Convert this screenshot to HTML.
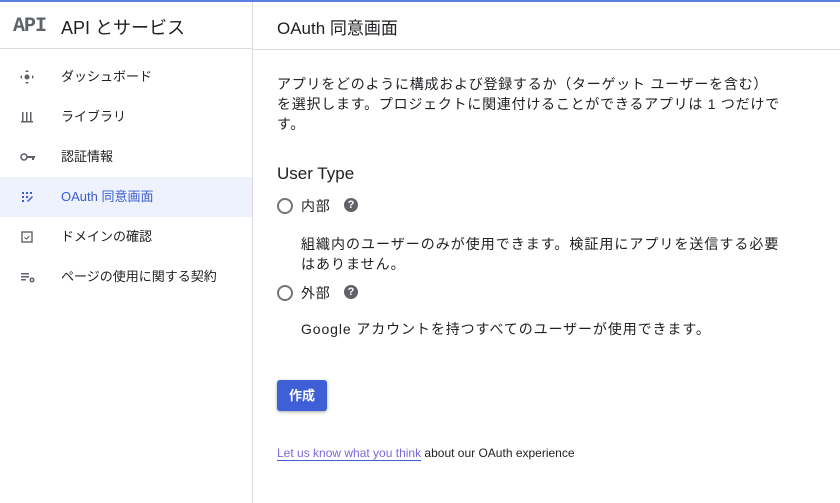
<!DOCTYPE html>
<html><head><meta charset="utf-8"><style>
*{margin:0;padding:0;box-sizing:border-box}
body{width:840px;height:503px;overflow:hidden;background:#fff;font-family:"Liberation Sans","Noto Sans CJK JP",sans-serif;color:#202124;position:relative}
.top{position:absolute;left:0;top:0;width:840px;height:2px;background:#5a7fe0}
.side{position:absolute;left:0;top:2px;width:253px;height:501px;border-right:1px solid #dadce0}
.hdr{height:47px;border-bottom:1px solid #dadce0;position:relative}
.logo{position:absolute;left:13px;top:13px;font-family:"Liberation Mono",monospace;font-weight:bold;font-size:20px;color:#5f6368;letter-spacing:-1px}
.title{position:absolute;left:61px;top:12px;font-size:18px;color:#202124}
.item{position:absolute;left:0;width:252px;height:40px;font-size:13px;line-height:40px}
.item span{position:absolute;left:61px}
.item svg{position:absolute;left:20px;top:13px}
.sel{background:#edf2fc;color:#3c5bd0}
h1{position:absolute;left:277px;top:14px;font-size:17px;font-weight:normal;white-space:nowrap}
.hline{position:absolute;left:253px;top:49px;width:587px;height:1px;background:#dadce0}
p{position:absolute;font-size:14px;line-height:20px;white-space:nowrap}
.j{letter-spacing:0.75px}
.radio{position:absolute;left:277px;width:16px;height:16px;border:2px solid #757575;border-radius:50%}
.q{position:absolute;width:14px;height:14px;border-radius:50%;background:#5f6368;color:#fff;font-size:11px;font-weight:bold;text-align:center;line-height:14px}
.btn{position:absolute;left:277px;top:380px;width:50px;height:31px;background:#3f5fd6;border-radius:3px;color:#fff;font-size:13px;font-weight:bold;text-align:center;line-height:31px;box-shadow:0 1px 3px rgba(0,0,0,.35)}
</style></head><body>
<div class="top"></div>
<div class="side">
<div class="hdr"><div class="logo">API</div><div class="title">API とサービス</div></div>
<div class="item" style="top:55px"><svg width="14" height="14" viewBox="0 0 14 14" fill="#5f6368"><path d="M7 0l2 2H5zM7 14l2-2H5zM0 7l2-2v4zM14 7l-2-2v4z"/><circle cx="7" cy="7" r="2.5"/></svg><span>ダッシュボード</span></div>
<div class="item" style="top:95px"><svg width="14" height="14" viewBox="0 0 14 14" fill="#5f6368"><rect x="2" y="2" width="1.5" height="9"/><rect x="6" y="2" width="1.5" height="9"/><rect x="10" y="2" width="1.5" height="9"/><rect x="1" y="11" width="12" height="1.5"/></svg><span>ライブラリ</span></div>
<div class="item" style="top:135px"><svg width="16" height="14" viewBox="0 0 16 14" fill="#5f6368"><circle cx="4" cy="7" r="3" fill="none" stroke="#5f6368" stroke-width="1.6"/><rect x="7" y="6" width="8" height="2"/><rect x="12" y="7" width="2" height="3"/></svg><span>認証情報</span></div>
<div class="item sel" style="top:175px"><svg width="14" height="14" viewBox="0 0 14 14" fill="#3c5bd0"><rect x="2" y="2" width="2" height="2"/><rect x="6" y="2" width="2" height="2"/><rect x="10" y="2" width="2" height="2"/><rect x="2" y="6" width="2" height="2"/><rect x="6" y="6" width="2" height="2"/><rect x="2" y="10" width="2" height="2"/><path d="M12 6l1 1-5 5-1-1z"/></svg><span>OAuth 同意画面</span></div>
<div class="item" style="top:215px"><svg width="14" height="14" viewBox="0 0 14 14"><rect x="2" y="2" width="10" height="10" fill="none" stroke="#5f6368" stroke-width="1.4"/><path d="M4.5 7.5l2 1.5 3-3" fill="none" stroke="#5f6368" stroke-width="1.2"/></svg><span>ドメインの確認</span></div>
<div class="item" style="top:255px"><svg width="16" height="14" viewBox="0 0 16 14" fill="#5f6368"><rect x="1" y="3" width="8" height="1.5"/><rect x="1" y="6" width="8" height="1.5"/><rect x="1" y="9" width="5" height="1.5"/><circle cx="12" cy="10" r="2.5"/><circle cx="12" cy="10" r="1" fill="#fff"/></svg><span>ページの使用に関する契約</span></div>
</div>
<h1>OAuth 同意画面</h1>
<div class="hline"></div>
<p class="j" style="left:277px;top:74px">アプリをどのように構成および登録するか（ターゲット ユーザーを含む）<br>を選択します。プロジェクトに関連付けることができるアプリは 1 つだけで<br>す。</p>
<p style="left:277px;top:163px;font-size:17px;line-height:22px">User Type</p>
<div class="radio" style="top:198px"></div>
<p class="j" style="left:301px;top:196px">内部</p>
<div class="q" style="left:344px;top:198px">?</div>
<p class="j" style="left:301px;top:234px;letter-spacing:1px">組織内のユーザーのみが使用できます。検証用にアプリを送信する必要<br>はありません。</p>
<div class="radio" style="top:285px"></div>
<p class="j" style="left:301px;top:283px">外部</p>
<div class="q" style="left:344px;top:285px">?</div>
<p class="j" style="left:301px;top:319px;letter-spacing:0.9px">Google アカウントを持つすべてのユーザーが使用できます。</p>
<div class="btn">作成</div>
<p style="left:277px;top:443px;font-size:12px;color:#202124"><span style="color:#7a6ad8;border-bottom:1px solid #3f5fd6">Let us know what you think</span> about our OAuth experience</p>
</body></html>
